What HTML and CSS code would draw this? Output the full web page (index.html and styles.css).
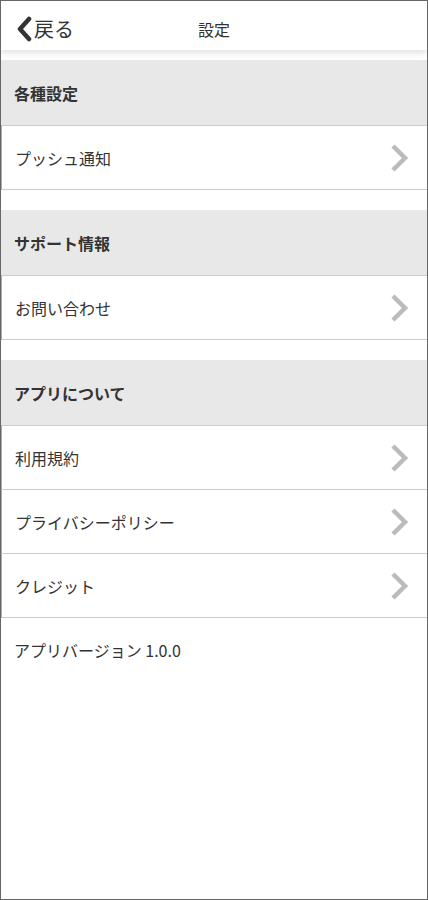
FILE: index.html
```html
<!DOCTYPE html>
<html lang="ja">
<head>
    <meta charset="UTF-8">
    <meta name="viewport" content="width=device-width, initial-scale=1.0">
    <title>設定</title>
    <link rel="stylesheet" href="styles.css">
</head>
<body>
    <div class="screen">
        <!-- Header -->
        <div class="header">
            <a class="back" href="#">
                <svg class="back-icon" width="18" height="26" viewBox="0 0 18 26">
                    <path d="M14 3 L5 13 L14 23" fill="none" stroke="#333" stroke-width="4.5" stroke-linecap="round" stroke-linejoin="round"/>
                </svg>
                <span>戻る</span>
            </a>
            <div class="title">設定</div>
        </div>

        <div class="content">
            <div class="section">
                <div class="section-title">各種設定</div>
                <a class="row" href="#">
                    <span>プッシュ通知</span>
                    <svg class="chevron" width="20" height="28" viewBox="0 0 20 28"><path d="M3 2 L15 14 L3 26" fill="none" stroke="#bbb" stroke-width="4.5"/></svg>
                </a>
            </div>

            <div class="section">
                <div class="section-title">サポート情報</div>
                <a class="row" href="#">
                    <span>お問い合わせ</span>
                    <svg class="chevron" width="20" height="28" viewBox="0 0 20 28"><path d="M3 2 L15 14 L3 26" fill="none" stroke="#bbb" stroke-width="4.5"/></svg>
                </a>
            </div>

            <div class="section">
                <div class="section-title">アプリについて</div>
                <a class="row" href="#">
                    <span>利用規約</span>
                    <svg class="chevron" width="20" height="28" viewBox="0 0 20 28"><path d="M3 2 L15 14 L3 26" fill="none" stroke="#bbb" stroke-width="4.5"/></svg>
                </a>
                <a class="row" href="#">
                    <span>プライバシーポリシー</span>
                    <svg class="chevron" width="20" height="28" viewBox="0 0 20 28"><path d="M3 2 L15 14 L3 26" fill="none" stroke="#bbb" stroke-width="4.5"/></svg>
                </a>
                <a class="row" href="#">
                    <span>クレジット</span>
                    <svg class="chevron" width="20" height="28" viewBox="0 0 20 28"><path d="M3 2 L15 14 L3 26" fill="none" stroke="#bbb" stroke-width="4.5"/></svg>
                </a>
                <div class="version">アプリバージョン 1.0.0</div>
            </div>
        </div>
    </div>
</body>
</html>
```

FILE: styles.css
```css
/* Page frame */
body {
    margin: 0;
    font-family: "Noto Sans CJK JP", "Noto Sans", sans-serif;
    color: #333;
    background-color: #fff;
}

.screen {
    height: 900px;
    border: 1px solid #666;
    box-sizing: border-box;
    overflow: hidden;
}

/* Header bar */
.header {
    height: 49px;
    padding-top: 6px;
    box-sizing: border-box;
    display: flex;
    align-items: center;
    position: relative;
    background-color: #fff;
    box-shadow: 0 3px 6px rgba(0, 0, 0, 0.12);
}

.back {
    display: flex;
    align-items: center;
    padding-left: 14px;
    color: #333;
    text-decoration: none;
    font-size: 20px;
}

.back-icon {
    margin-right: 1px;
}

.title {
    position: absolute;
    top: 16px;
    left: 0;
    right: 0;
    text-align: center;
    font-size: 16px;
    line-height: 24px;
    pointer-events: none;
}

/* Settings list */
.content {
    padding-top: 10px;
}

.section {
    margin-bottom: 20px;
}

.section-title {
    height: 65px;
    display: flex;
    align-items: center;
    padding-left: 13px;
    background-color: #e8e8e8;
    font-size: 16px;
    font-weight: 600;
}

.row {
    height: 63px;
    display: flex;
    align-items: center;
    justify-content: space-between;
    padding: 0 17px 0 13px;
    border-top: 1px solid #ccc;
    border-left: 1px solid #aaa;
    color: #333;
    text-decoration: none;
    font-size: 16px;
}

.row:last-of-type {
    border-bottom: 1px solid #ccc;
}

.version {
    height: 64px;
    display: flex;
    align-items: center;
    padding-left: 13px;
    font-size: 16px;
}
```
